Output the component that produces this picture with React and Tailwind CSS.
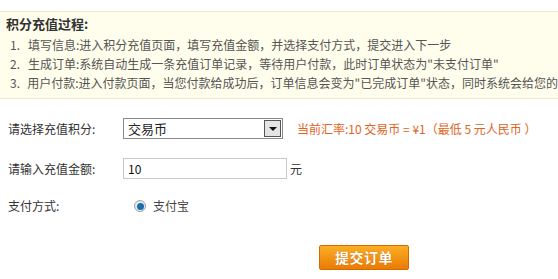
export default function App() {
  const font = { fontFamily: '"Noto Sans CJK SC", "Noto Sans", sans-serif' };
  return (
    <div className="w-[558px] h-[279px] bg-white overflow-hidden text-[12px] text-[#333]" style={font}>
      <div className="mt-[11px] h-[88px] bg-[#fffdeb] border-t border-b border-[#f1ead0] pl-[6px] pt-[3px]">
        <div className="text-[13px] font-bold text-[#333] leading-[18px]">积分充值过程:</div>
        <div className="pl-[4px] mt-[2px] text-[#555] leading-[19px] whitespace-nowrap">
          <div className="flex"><span className="w-[18px]">1.</span><span>填写信息:进入积分充值页面，填写充值金额，并选择支付方式，提交进入下一步</span></div>
          <div className="flex"><span className="w-[18px]">2.</span><span>生成订单:系统自动生成一条充值订单记录，等待用户付款，此时订单状态为"未支付订单"</span></div>
          <div className="flex"><span className="w-[18px]">3.</span><span>用户付款:进入付款页面，当您付款给成功后，订单信息会变为"已完成订单"状态，同时系统会给您的</span></div>
        </div>
      </div>

      <div className="pl-[8px]">
        <div className="flex items-center mt-[19px] h-[21px]">
          <span className="w-[115px]">请选择充值积分:</span>
          <div className="w-[160px] h-[21px] border border-[#8a8a8a] bg-white flex items-center justify-between">
            <span className="pl-[4px] text-[13px] text-[#222]">交易币</span>
            <div className="w-[17px] h-[17px] mr-[1px] border border-[#555] bg-[#e4e4e4] flex items-center justify-center">
              <div className="w-0 h-0 border-l-[4px] border-r-[4px] border-t-[4px] border-l-transparent border-r-transparent border-t-[#111]"></div>
            </div>
          </div>
          <span className="ml-[14px] text-[#e0641e] whitespace-nowrap">当前汇率:10 交易币 = ¥1（最低 5 元人民币 ）</span>
        </div>

        <div className="flex items-center mt-[19px] h-[21px]">
          <span className="w-[115px]">请输入充值金额:</span>
          <div className="w-[164px] h-[21px] border border-[#c9c9c9] bg-white flex items-center pl-[4px] text-[#111]">10</div>
          <span className="ml-[3px]">元</span>
        </div>

        <div className="flex items-center mt-[17px] h-[20px]">
          <span className="w-[126px]">支付方式:</span>
          <div className="w-[12px] h-[12px] rounded-full border border-[#9aa4ad] bg-[#e6eaee] flex items-center justify-center">
            <div className="w-[7px] h-[7px] rounded-full bg-[#1a6fa8]"></div>
          </div>
          <span className="ml-[7px] text-[#444]">支付宝</span>
        </div>

        <div className="flex mt-[29px] pl-[311px]">
          <div className="w-[90px] h-[25px] rounded-[2px] border border-[#d36c00] bg-gradient-to-b from-[#fbae22] to-[#ea7a04] flex items-center justify-center text-white font-bold text-[14px] tracking-[0.5px]" style={{ textShadow: '0 0 1px #b85a00' }}>
            提交订单
          </div>
        </div>
      </div>
    </div>
  );
}
